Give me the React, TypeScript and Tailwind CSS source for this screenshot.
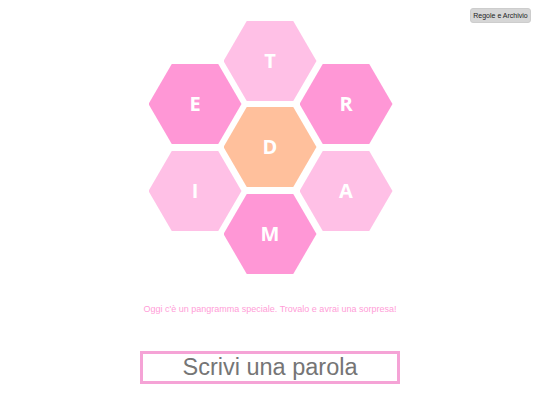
import React from "react";

type Cell = { letter: string; left: string; top: string; bg: string };

const cells: Cell[] = [
  { letter: "T", left: "left-[75px]", top: "top-[0px]", bg: "bg-[#ffc0e6]" },
  { letter: "E", left: "left-[0px]", top: "top-[43px]", bg: "bg-[#ff97d6]" },
  { letter: "R", left: "left-[151px]", top: "top-[43px]", bg: "bg-[#ff97d6]" },
  { letter: "D", left: "left-[75px]", top: "top-[86px]", bg: "bg-[#ffc09c]" },
  { letter: "I", left: "left-[0px]", top: "top-[130px]", bg: "bg-[#ffc0e6]" },
  { letter: "A", left: "left-[151px]", top: "top-[130px]", bg: "bg-[#ffc0e6]" },
  { letter: "M", left: "left-[75px]", top: "top-[173px]", bg: "bg-[#ff97d6]" },
];

const Hex = ({ letter, left, top, bg }: Cell) => (
  <div
    className={`absolute ${left} ${top} w-[93px] h-[80px] ${bg} flex items-center justify-center [clip-path:polygon(25%_0,75%_0,100%_50%,75%_100%,25%_100%,0_50%)]`}
  >
    <span className="text-white font-bold text-[20px] leading-none font-['Open_Sans',sans-serif]">
      {letter}
    </span>
  </div>
);

export default function App() {
  return (
    <div className="relative w-[540px] h-[405px] bg-white overflow-hidden font-['Liberation_Sans',Arial,sans-serif]">
      {/* Rules button */}
      <button className="absolute top-[8px] right-[9px] w-[61px] h-[15px] rounded-[3px] bg-[#d6d6d6] border border-[#cdcdcd] text-[7px] text-[#222] leading-none">
        Regole e Archivio
      </button>

      <div className="flex flex-col items-center pt-[21px]">
        {/* Honeycomb */}
        <div className="relative w-[244px] h-[253px] ml-[1px]">
          {cells.map((c) => (
            <Hex key={c.letter} {...c} />
          ))}
        </div>

        <p className="mt-[29px] text-[9px] leading-[12px] text-[#ff9ed8]">
          Oggi c'è un pangramma speciale. Trovalo e avrai una sorpresa!
        </p>

        <input
          type="text"
          placeholder="Scrivi una parola"
          className="mt-[36px] w-[260px] h-[33px] border-[3px] border-[#f5a3d6] text-center text-[23.5px] text-[#757575] placeholder:text-[#757575] outline-none"
        />
      </div>
    </div>
  );
}
